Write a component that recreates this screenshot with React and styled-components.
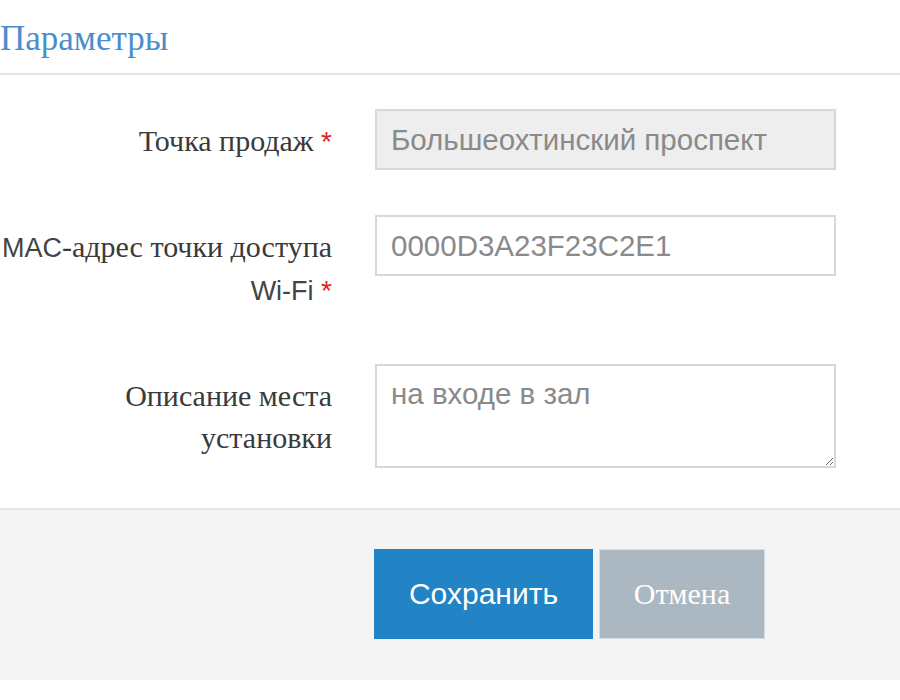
import React from 'react';
import styled, { createGlobalStyle } from 'styled-components';

const GlobalStyle = createGlobalStyle`
  html, body {
    margin: 0;
    padding: 0;
    background: #fff;
  }
  body {
    font-family: "Liberation Serif", "Times New Roman", serif;
  }
`;

const Page = styled.div`
  width: 900px;
  height: 700px;
  overflow: hidden;
  background: #fff;
`;

const Header = styled.div`
  padding: 19px 0 14px 0;
  border-bottom: 2px solid #dde7f0;
`;

const Title = styled.h3`
  margin: 0;
  font-family: "Liberation Serif", "Times New Roman", serif;
  font-weight: normal;
  font-size: 35px;
  line-height: 40px;
  color: #4b8dcc;
`;

const Form = styled.div`
  padding: 34px 0 40px 0;
  display: flex;
  flex-direction: column;
  gap: 44px;
`;

const Row = styled.div`
  display: flex;
  align-items: flex-start;
  gap: 43px;
`;

const Label = styled.div`
  width: 332px;
  flex-shrink: 0;
  box-sizing: border-box;
  padding: 11px 0 8px 0;
  text-align: right;
  font-family: "Liberation Serif", "Times New Roman", serif;
  font-size: 30px;
  line-height: 42px;
  color: #3a3a3a;
`;

const Latin = styled.span`
  font-family: "Liberation Sans", Arial, sans-serif;
  font-size: 27px;
  color: #444;
`;

const Required = styled.span`
  font-family: "Liberation Sans", Arial, sans-serif;
  color: #e02222;
  font-size: 28px;
`;

const Input = styled.input`
  width: 461px;
  height: 61px;
  box-sizing: border-box;
  padding: 0 14px;
  border: 2px solid #d8d8d8;
  background: ${(p) => (p.readOnly ? '#eeeeee' : '#fff')};
  font-family: "Liberation Sans", Arial, sans-serif;
  font-size: 29.5px;
  color: #8a8a8a;
  outline: none;
`;

const TextArea = styled.textarea`
  width: 461px;
  height: 104px;
  box-sizing: border-box;
  padding: 10px 14px;
  border: 2px solid #d8d8d8;
  background: #fff;
  font-family: "Liberation Sans", Arial, sans-serif;
  font-size: 29.5px;
  line-height: 36px;
  color: #8a8a8a;
  outline: none;
  resize: vertical;
`;

const Footer = styled.div`
  border-top: 2px solid #e4e4e4;
  background: #f4f4f4;
  padding: 39px 0 41px 374px;
  display: flex;
  gap: 6px;
`;

const Button = styled.button`
  height: 90px;
  padding: 0;
  width: ${(p) => p.$width}px;
  border: 1px solid ${(p) => (p.$primary ? '#2283c5' : '#d6dde2')};
  background: ${(p) => (p.$primary ? '#2283c5' : '#abb8c1')};
  color: #fff;
  font-family: ${(p) =>
    p.$primary ? '"Liberation Sans", Arial, sans-serif' : '"Liberation Serif", "Times New Roman", serif'};
  font-size: 30px;
  cursor: pointer;
`;

export default function App() {
  return (
    <Page>
      <GlobalStyle />
      <Header>
        <Title>Параметры</Title>
      </Header>
      <Form>
        <Row>
          <Label>
            Точка продаж <Required>*</Required>
          </Label>
          <Input readOnly value="Большеохтинский проспект" />
        </Row>
        <Row>
          <Label>
            <Latin>MAC</Latin>-адрес точки доступа
            <br />
            <Latin>Wi-Fi</Latin> <Required>*</Required>
          </Label>
          <Input defaultValue="0000D3A23F23C2E1" />
        </Row>
        <Row>
          <Label>
            Описание места
            <br />
            установки
          </Label>
          <TextArea defaultValue="на входе в зал" />
        </Row>
      </Form>
      <Footer>
        <Button $primary $width={219}>Сохранить</Button>
        <Button $width={166}>Отмена</Button>
      </Footer>
    </Page>
  );
}
